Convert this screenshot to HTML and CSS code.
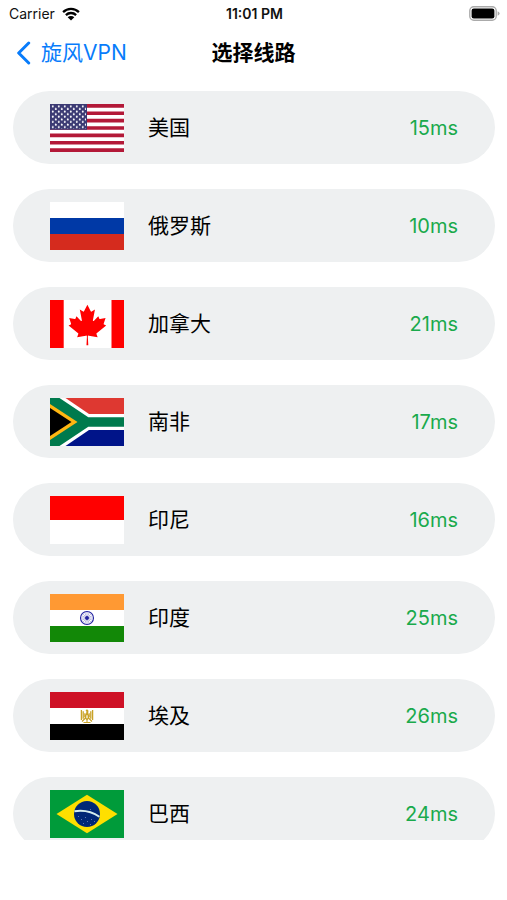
FILE: index.html
```
<!DOCTYPE html>
<html lang="zh-CN">
<head>
<meta charset="utf-8">
<meta name="viewport" content="width=device-width, initial-scale=1">
<title>选择线路</title>
<link rel="stylesheet" href="styles.css">
</head>
<body>
<div class="screen">
  <div class="status">
    <div class="carrier">
      <span>Carrier</span>
      <svg class="wifi" viewBox="0 0 18 14" aria-hidden="true">
        <path d="M1.1 5.1a11.3 11.3 0 0 1 15.8 0M3.9 8.1a7.3 7.3 0 0 1 10.2 0" fill="none" stroke="#000" stroke-width="2.3"/>
        <path d="M9 13.6 5.7 10.3a4.7 4.7 0 0 1 6.6 0z"/>
      </svg>
    </div>
    <span class="time">11:01 PM</span>
    <svg class="battery" viewBox="0 0 31 15" aria-hidden="true">
      <rect x=".8" y=".8" width="26.4" height="13.4" rx="4" fill="#fff" stroke="#aaa" stroke-width="1.4"/>
      <rect x="2.6" y="2.6" width="22.8" height="9.8" rx="2.2"/>
      <path d="M28.6 5.2q2 .7 2 2.3t-2 2.3z" fill="#aaa"/>
    </svg>
  </div>
  <header class="nav">
    <a class="back" href="#">
      <svg class="chevron" viewBox="0 0 14 24" aria-hidden="true"><path d="M12.2 2 2.2 12l10 10" fill="none" stroke="#087cfb" stroke-width="3" stroke-linecap="round" stroke-linejoin="round"/></svg>
      <span>旋风VPN</span>
    </a>
    <h1 class="title">选择线路</h1>
  </header>
  <main class="list">
    <button class="route" type="button">
      <svg class="flag" viewBox="0 0 74 48" aria-hidden="true">
        <defs>
          <pattern id="stars" width="6" height="5.2" patternUnits="userSpaceOnUse">
            <circle cx="2.8" cy="2.4" r="1" fill="#fff"/>
            <circle cx="5.8" cy="5" r="1" fill="#fff"/>
            <circle cx="-.2" cy="5" r="1" fill="#fff"/>
            <circle cx="5.8" cy="-.2" r="1" fill="#fff"/>
            <circle cx="-.2" cy="-.2" r="1" fill="#fff"/>
          </pattern>
        </defs>
        <path fill="#fff" d="M0 0h74v48H0z"/>
        <path d="M0 1.85h74M0 9.23h74M0 16.6h74M0 24h74M0 31.4h74M0 38.77h74M0 46.15h74" stroke="#b31938" stroke-width="3.69"/>
        <path fill="#3c3b74" d="M0 0h37v25.8H0z"/>
        <path fill="url(#stars)" d="M1 1h35v24H1z"/>
      </svg>
      <span class="name">美国</span><span class="ping">15ms</span>
    </button>
    <button class="route" type="button">
      <svg class="flag" viewBox="0 0 74 48" aria-hidden="true">
        <path fill="#fff" d="M0 0h74v16H0z"/><path fill="#0039a6" d="M0 16h74v16H0z"/><path fill="#d52b1e" d="M0 32h74v16H0z"/>
      </svg>
      <span class="name">俄罗斯</span><span class="ping">10ms</span>
    </button>
    <button class="route" type="button">
      <svg class="flag" viewBox="0 0 74 48" aria-hidden="true">
        <path fill="#fff" d="M0 0h74v48H0z"/><path fill="#f00" d="M0 0h13.7v48H0zM61.5 0H74v48H61.5z"/>
        <path fill="#f00" transform="translate(-11.1 .6) scale(.0101)" d="M4710 4430l45-863a95 95 0 0 0-111-98l-859 151 116-320a65 65 0 0 0-20-73l-941-762 212-99a65 65 0 0 0 34-79l-186-572 542 115a65 65 0 0 0 73-38l105-247 423 454a65 65 0 0 0 111-57l-204-1052 327 189a65 65 0 0 0 91-27l332-652 332 652a65 65 0 0 0 91 27l327-189-204 1052a65 65 0 0 0 111 57l423-454 105 247a65 65 0 0 0 73 38l542-115-186 572a65 65 0 0 0 34 79l212 99-941 762a65 65 0 0 0-20 73l116 320-859-151a95 95 0 0 0-111 98l45 863z"/>
      </svg>
      <span class="name">加拿大</span><span class="ping">21ms</span>
    </button>
    <button class="route" type="button">
      <svg class="flag" viewBox="0 0 74 48" aria-hidden="true">
        <path fill="#fff" d="M0 0h74v48H0z"/>
        <path fill="#de3831" d="M15.5 0H74v16H39z"/>
        <path fill="#001489" d="M15.5 48H74V32H39z"/>
        <path fill="#007a4d" d="M0 0h9.5l28.8 19.2H74v9.6H38.3L9.5 48H0z"/>
        <path fill="#ffb612" d="M0 6 27.5 24 0 42z"/>
        <path d="M0 10 21.5 24 0 38z"/>
      </svg>
      <span class="name">南非</span><span class="ping">17ms</span>
    </button>
    <button class="route" type="button">
      <svg class="flag" viewBox="0 0 74 48" aria-hidden="true">
        <path fill="#f00" d="M0 0h74v24H0z"/><path fill="#fff" d="M0 24h74v24H0z"/>
      </svg>
      <span class="name">印尼</span><span class="ping">16ms</span>
    </button>
    <button class="route" type="button">
      <svg class="flag" viewBox="0 0 74 48" aria-hidden="true">
        <path fill="#f93" d="M0 0h74v16H0z"/><path fill="#fff" d="M0 16h74v16H0z"/><path fill="#128807" d="M0 32h74v16H0z"/>
        <g stroke="#2222a0" fill="none">
          <circle cx="37" cy="24" r="6.5" stroke-width="1.1"/>
          <path stroke-width=".3" d="M31 24h12M37 18v12M32.8 19.8l8.4 8.4M41.2 19.8l-8.4 8.4M31.5 21.7l11 4.6M42.5 21.7l-11 4.6M34.7 18.5l4.6 11M39.3 18.5l-4.6 11"/>
          <circle cx="37" cy="24" r="1.4" fill="#2222a0"/>
        </g>
      </svg>
      <span class="name">印度</span><span class="ping">25ms</span>
    </button>
    <button class="route" type="button">
      <svg class="flag" viewBox="0 0 74 48" aria-hidden="true">
        <path fill="#ce1126" d="M0 0h74v16H0z"/><path fill="#fff" d="M0 16h74v16H0z"/><path d="M0 32h74v16H0z"/>
        <g fill="none" stroke="#c9a227">
          <path stroke-width="1.3" d="M31.4 18v10M33.2 19.2v7.5M34.9 21.3v4M42.6 18v10M40.8 19.2v7.5M39.1 21.3v4"/>
          <path stroke-width="1.1" d="M33.5 30.5h7M32 29.5l3.5-3.5M42 29.5 38.5 26M37 26.5v3.5"/>
        </g>
        <path fill="#c9a227" d="M35.6 18.2q1-1.2 2.2-.5.8.5.6 2l-.3 2 1 1.5v3.3L37 28.3l-2.1-1.8v-3.3l1.2-1.6.3-2.2z"/>
        <path fill="#fff" d="M36.4 23.2h1.2v3h-1.2z"/>
      </svg>
      <span class="name">埃及</span><span class="ping">26ms</span>
    </button>
    <button class="route" type="button">
      <svg class="flag" viewBox="0 0 74 48" aria-hidden="true">
        <path fill="#009b3a" d="M0 0h74v48H0z"/><path fill="#fedf00" d="M6.5 24 37 4.8 67.5 24 37 43.2z"/>
        <circle cx="37" cy="24" r="13" fill="#002776"/>
        <path d="M24.4 21.2q14-2.2 25 5.5" fill="none" stroke="#d5eeee" stroke-width="1.9"/>
        <path fill="#5c76b0" d="M28 26h1v1h-1zM31 29h1v1h-1zM35 27h1v1h-1zM37 31h1v1h-1zM41 29h1v1h-1zM44 31h1v1h-1zM33 33h1v1h-1zM40 34h1v1h-1zM40 19h1v1h-1z"/>
      </svg>
      <span class="name">巴西</span><span class="ping">24ms</span>
    </button>
  </main>
</div>
</body>
</html>
```
FILE: styles.css
```
* {
  box-sizing: border-box;
}

body {
  margin: 0;
  background: #fff;
  color: #111;
  font-family: Inter, "Noto Sans CJK SC", sans-serif;
}

.screen {
  display: flex;
  flex-direction: column;
  height: 100vh;
  padding-bottom: 60px;
}

.status,
.nav {
  display: grid;
  grid-template-columns: 1fr auto 1fr;
  align-items: center;
  flex: none;
}

.status {
  height: 27px;
  padding: 0 7px 0 9px;
  font-size: 14px;
  line-height: 20px;
}

.carrier {
  display: flex;
  align-items: center;
  gap: 7px;
}

.wifi {
  width: 18px;
  height: 14px;
}

.time {
  font-weight: 600;
}

.battery {
  width: 31px;
  height: 15px;
  justify-self: end;
}

.nav {
  height: 51px;
  padding: 0 16px;
}

.back {
  display: flex;
  align-items: center;
  gap: 10px;
  color: #087cfb;
  font-size: 21px;
  line-height: 28px;
  text-decoration: none;
}

.chevron {
  width: 15px;
  height: 24px;
}

.title {
  margin: 0;
  color: #000;
  font-size: 21px;
  font-weight: 700;
  line-height: 28px;
}

.list {
  display: flex;
  flex: 1;
  flex-direction: column;
  gap: 25px;
  min-height: 0;
  margin-top: 13px;
  padding: 0 12px 0 13px;
  overflow-y: auto;
  scrollbar-width: none;
}

.route {
  display: flex;
  flex: none;
  align-items: center;
  gap: 24px;
  height: 73px;
  padding: 0 37px;
  border: 0;
  border-radius: 37px;
  background: #eef0f1;
  color: #000;
  font: inherit;
  font-size: 21px;
  line-height: 28px;
  text-align: left;
}

.flag {
  flex: none;
  width: 74px;
  height: 48px;
}

.name {
  flex: 1;
}

.ping {
  color: #1aaa4c;
  font-size: 20px;
}
```
